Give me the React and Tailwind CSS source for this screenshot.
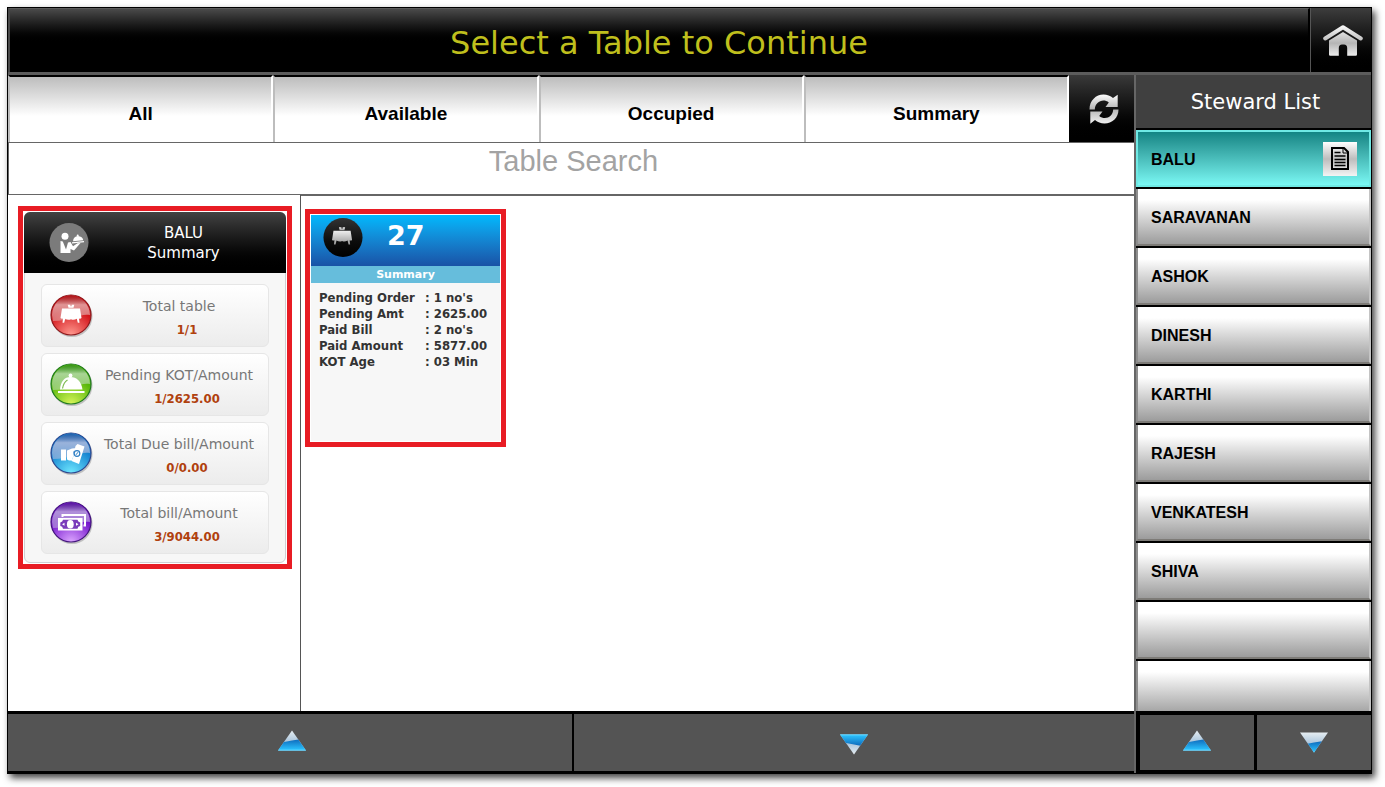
import React, { useState } from 'react';

const TABS = ['All', 'Available', 'Occupied', 'Summary'];

const STEWARDS = ['BALU', 'SARAVANAN', 'ASHOK', 'DINESH', 'KARTHI', 'RAJESH', 'VENKATESH', 'SHIVA'];

const TABLE_ROWS = [
  ['Pending Order', "1 no's"],
  ['Pending Amt', '2625.00'],
  ['Paid Bill', "2 no's"],
  ['Paid Amount', '5877.00'],
  ['KOT Age', '03 Min'],
];

const STATS = [
  { label: 'Total table', value: '1/1', icon: 'table', top: '#8e1a1d', mid: '#e2a3a3', low: '#d3141a', glow: '#ff9a90' },
  { label: 'Pending KOT/Amount', value: '1/2625.00', icon: 'cloche', top: '#1f7a1f', mid: '#b2d8a4', low: '#56b60a', glow: '#d8f55a' },
  { label: 'Total Due bill/Amount', value: '0/0.00', icon: 'hand', top: '#2c468f', mid: '#a9b8dc', low: '#1583d0', glow: '#6fe8ff' },
  { label: 'Total bill/Amount', value: '3/9044.00', icon: 'cash', top: '#43157d', mid: '#b79fdb', low: '#7414cc', glow: '#dca6ff' },
];

function TableGlyph({ fill = '#fff' }) {
  return (
    <g fill={fill}>
      <path d="M12 14.500h18l1.500 9.500q-1.200 1.200-2.500.4l.5 4.300h-1.700l-1-4q-3 1.800-5.800.5-2.800 1.300-5.800-.5l-1 4h-1.700l.5-4.300q-1.300.8-2.500-.4z" />
      <path d="M18.500 13.800l-.8-3h2.600l.2 1.500h1l.2-1.500h2.600l-.8 3z" />
    </g>
  );
}

function StatGlyph({ name }) {
  if (name === 'table') return <TableGlyph />;
  if (name === 'cloche') {
    return (
      <g fill="#fff">
        <circle cx="20.500" cy="12.500" r="1.900" />
        <path d="M10 26.500C10.500 18.500 14.500 14 20.500 14s11 4.500 12 12.500z" />
        <path d="M8 28h26.500v2H8z" />
        <path d="M12.500 25.500c.8-4.500 2.500-7 5-8.500" stroke="#7dbb52" strokeWidth="1.200" fill="none" />
      </g>
    );
  }
  if (name === 'hand') {
    return (
      <g fill="#fff">
        <path d="M11 17.500h5v11h-5z" />
        <path d="M17 18.500l5-2 5-.5v2.500l-4 1 .5 4-1.500 5h-3l-2-1z" />
        <path d="M25.500 14l2-2 7 2.500-5.500 17.500-7.500-3 1.500-3.500z" />
        <circle cx="27" cy="21.500" r="2.800" fill="none" stroke="#2f7fc4" strokeWidth="1.200" />
        <path d="M26 22.800l2-2.600" stroke="#2f7fc4" strokeWidth="1" />
      </g>
    );
  }
  return (
    <g>
      <path d="M12.500 16v-2h22.500v10.500h-1.500" fill="none" stroke="#fff" strokeWidth="2" />
      <path d="M8 17h24.500v12.500H8z" fill="#fff" />
      <path d="M13 18.800h14.500q.3 2.300 2.700 2.600v3.700q-2.400.3-2.700 2.600H13q-.3-2.300-2.700-2.600v-3.700q2.400-.3 2.700-2.600z" fill="#7a3cba" />
      <ellipse cx="20.300" cy="23.200" rx="3.400" ry="4.300" fill="#fff" />
      <path d="M12 23.200l2.500-1.500v3zM28.500 23.200L26 21.700v3z" fill="#fff" />
    </g>
  );
}

function StatIcon({ stat }) {
  const id = `stat-${stat.icon}`;
  return (
    <svg viewBox="0 0 44 44" className="size-11 shrink-0" aria-hidden="true">
      <defs>
        <radialGradient id={`${id}-glow`} cx="0.5" cy="1" r="0.65">
          <stop offset="0" stopColor={stat.glow} />
          <stop offset="1" stopColor={stat.low} />
        </radialGradient>
        <linearGradient id={`${id}-top`} x1="0" y1="0" x2="0" y2="1">
          <stop offset="0" stopColor={stat.top} stopOpacity="0.55" />
          <stop offset="0.35" stopColor={stat.mid} stopOpacity="0.9" />
          <stop offset="1" stopColor={stat.mid} stopOpacity="0.6" />
        </linearGradient>
      </defs>
      <ellipse cx="22" cy="22.500" rx="20.500" ry="20.500" fill="#000" opacity="0.2" />
      <circle cx="21" cy="21" r="20" fill={`url(#${id}-glow)`} stroke={stat.top} strokeWidth="1.200" />
      <path d="M2 21a19 19 0 0 1 38 0C30 19 22 27 3 27z" fill={`url(#${id}-top)`} />
      <StatGlyph name={stat.icon} />
    </svg>
  );
}

function WaiterIcon() {
  return (
    <svg viewBox="0 0 40 40" className="size-10 shrink-0" aria-hidden="true">
      <circle cx="20" cy="19.500" r="19.500" fill="#7b7b7b" />
      <circle cx="16" cy="13.300" r="3.500" fill="#fff" />
      <path d="M11.500 18l2.300.5 3.200 8 2-7 2.500-.5 2.500 4.300 4.500-3 3-.3-6.500 7.500-3.500-1.500v4h-10z" fill="#fff" />
      <path d="M24 18.300q.5-5 5-5.300 4.500.3 5.300 4.300z" fill="#fff" />
      <circle cx="28.700" cy="12.500" r="1" fill="#fff" />
      <path d="M23 19.300l12-1.300v1.200l-12 1.300z" fill="#fff" />
    </svg>
  );
}

function DarkTableIcon() {
  return (
    <svg viewBox="0 0 42 42" className="size-10" aria-hidden="true">
      <defs>
        <linearGradient id="dark-disc" x1="0" y1="0" x2="0" y2="1">
          <stop offset="0" stopColor="#333" />
          <stop offset="0.6" stopColor="#0c0c0c" />
          <stop offset="1" stopColor="#000" />
        </linearGradient>
        <linearGradient id="dark-glyph" x1="0" y1="0" x2="0" y2="1">
          <stop offset="0" stopColor="#eee" />
          <stop offset="1" stopColor="#999" />
        </linearGradient>
      </defs>
      <circle cx="21" cy="20.500" r="20.500" fill="url(#dark-disc)" />
      <g transform="translate(-1 -1)">
        <TableGlyph fill="url(#dark-glyph)" />
      </g>
    </svg>
  );
}

function HomeIcon() {
  return (
    <svg viewBox="0 0 40 32" className="h-8 w-10" aria-hidden="true">
      <defs>
        <linearGradient id="home-fill" x1="0" y1="0" x2="0" y2="32" gradientUnits="userSpaceOnUse">
          <stop offset="0" stopColor="#fff" />
          <stop offset="0.6" stopColor="#b5b5b5" />
          <stop offset="1" stopColor="#eee" />
        </linearGradient>
      </defs>
      <path d="M2.200 14.500L20 3.300l17.800 11.200" fill="none" stroke="url(#home-fill)" strokeWidth="4" strokeLinecap="round" strokeLinejoin="round" />
      <path d="M6 16.500L20 8l14 8.500V30.500q0 1.300-1.300 1.300h-8.500V24q0-3.500-3.200-3.500h-2q-3.200 0-3.200 3.500v7.800H7.300q-1.300 0-1.300-1.300z" fill="url(#home-fill)" />
    </svg>
  );
}

function RefreshIcon() {
  return (
    <svg viewBox="0 0 30 30" className="size-[30px]" aria-hidden="true">
      <defs>
        <linearGradient id="refresh-fill" x1="0" y1="0" x2="0" y2="30" gradientUnits="userSpaceOnUse">
          <stop offset="0" stopColor="#fff" />
          <stop offset="0.5" stopColor="#b5b5b5" />
          <stop offset="1" stopColor="#f2f2f2" />
        </linearGradient>
      </defs>
      <g fill="url(#refresh-fill)">
        <path d="M.5 15.500C.5 6.500 7 .5 14.500.5c3.600 0 7 1.300 9.500 3.500L28.700.8V13H16.500l3.300-4.500C14 4 6 8 5.800 15.500z" />
        <path d="M29.500 15.500c0 8.500-6.500 14-14 14-3.600 0-7-1.300-9.500-3.500L1.300 29.700V17.500h12.200l-3.300 4.500c5.800 4.500 13.800 1 14-6.500z" />
      </g>
    </svg>
  );
}

function NoteIcon() {
  return (
    <svg viewBox="0 0 18 23" className="h-[23px] w-[18px]" fill="none" stroke="#000" aria-hidden="true">
      <path d="M1 1h12l4 4V22H1z" strokeWidth="2" />
      <path d="M12 1v5h5" strokeWidth="1" />
      <path d="M3.500 5.500h6M3.500 9h11M3.500 12.500h11M3.500 15.500h11M3.500 18.500h11" strokeWidth="1.500" />
    </svg>
  );
}

function Arrow({ id, direction = 'up', flipped = false }) {
  const down = direction === 'down';
  return (
    <svg viewBox="0 0 28 21" className="h-[21px] w-7" aria-hidden="true">
      <defs>
        <linearGradient id={id} x1="0" y1="8" x2="0" y2="20" gradientUnits="userSpaceOnUse">
          <stop offset="0" stopColor="#0a5fb4" />
          <stop offset="1" stopColor="#2cc4ff" />
        </linearGradient>
        <linearGradient id={`${id}-tip`} x1="0" y1="0" x2="0" y2="12" gradientUnits="userSpaceOnUse">
          <stop offset="0" stopColor="#e8eef2" />
          <stop offset="1" stopColor="#a9c4dc" />
        </linearGradient>
        <clipPath id={`${id}-clip`}>
          <path d={down && !flipped ? 'M0 .5h28L14 20.500z' : 'M0 20.500h28L14 .5z'} />
        </clipPath>
      </defs>
      <g transform={flipped ? 'matrix(1 0 0 -1 0 21)' : undefined}>
        <g clipPath={`url(#${id}-clip)`}>
          <path d="M0 0h28v21H0z" fill={`url(#${id}-tip)`} />
          <path d="M0 12.500q8-.5 14-2T28 9v12H0z" fill={`url(#${id})`} />
          <path d="M0 19.700h28v1H0z" fill="#7fe0ff" />
        </g>
      </g>
    </svg>
  );
}

function StatCard({ stat }) {
  return (
    <li className="flex h-[63px] items-center rounded-md border border-[#e6e6e6] bg-linear-to-b from-white to-[#ececec] pl-2">
      <StatIcon stat={stat} />
      <div className="flex-1 pt-1 pr-1 text-center">
        <p className="text-sm leading-6 whitespace-nowrap text-[#777]">{stat.label}</p>
        <p className="pl-4 font-['DejaVu_Sans_Condensed','DejaVu_Sans',sans-serif] text-[13px] leading-6 font-bold text-[#b0410e]">
          {stat.value}
        </p>
      </div>
    </li>
  );
}

function SummaryPanel() {
  return (
    <section className="border-[5px] border-[#e81c24] p-px">
      <div className="rounded-md border border-[#cfcfd3] bg-[#f7f7f7]">
        <header className="-mx-px -mt-px flex h-[61px] items-center rounded-t-md bg-linear-to-b from-[#434343] to-black pl-[25px] text-white">
          <WaiterIcon />
          <h2 className="flex-1 pr-8 pl-6 text-center text-[15px] leading-5">
            BALU
            <br />
            Summary
          </h2>
        </header>
        <ul className="flex flex-col gap-1.5 px-4 pt-[11px] pb-2">
          {STATS.map((stat) => (
            <StatCard key={stat.label} stat={stat} />
          ))}
        </ul>
      </div>
    </section>
  );
}

function TableCard() {
  return (
    <article className="h-[238px] w-[201px] border-[5px] border-[#e81c24] p-px">
      <div className="flex h-full flex-col bg-[#f7f7f7]">
        <header className="flex h-[51px] bg-linear-to-b from-[#00b9fd] to-[#1952a6] pt-[3px] pl-3">
          <DarkTableIcon />
          <h2 className="pl-6 text-[27px] leading-9 font-bold text-white">27</h2>
        </header>
        <p className="bg-[#66bddc] text-center text-[11px] leading-[17px] font-bold text-white">Summary</p>
        <table className="mt-[7px] ml-2 text-left font-['DejaVu_Sans_Condensed','DejaVu_Sans',sans-serif] text-[13px] leading-4 text-[#333]">
          <tbody>
            {TABLE_ROWS.map(([label, value]) => (
              <tr key={label}>
                <th scope="row" className="w-[106px] p-0 font-bold whitespace-nowrap">{label}</th>
                <td className="p-0 font-bold whitespace-nowrap">: {value}</td>
              </tr>
            ))}
          </tbody>
        </table>
      </div>
    </article>
  );
}

function StewardRow({ name, active, onSelect }) {
  if (active) {
    return (
      <li className="flex h-[57px] shrink-0 items-center border-2 border-[#6fe9e4] bg-linear-to-b from-[#118584] to-[#7af8f4] pr-3">
        <button type="button" onClick={onSelect} className="h-full flex-1 pt-0.5 pl-[13px] text-left font-bold">
          {name}
        </button>
        <button
          type="button"
          aria-label={`${name} notes`}
          className="flex size-[34px] items-center justify-center bg-linear-to-b from-white via-[#bdbdbd] to-[#f4f4f4]"
        >
          <NoteIcon />
        </button>
      </li>
    );
  }
  return (
    <li className="h-[57px] shrink-0 border-x-2 border-b-2 border-r-[#c4c4c4] border-b-[#7d7b77] border-l-[#8d8d8d] bg-linear-to-b from-white from-20% to-[#9c9c9c]">
      {name && (
        <button type="button" onClick={onSelect} className="h-full w-full pt-0.5 pl-[13px] text-left font-bold">
          {name}
        </button>
      )}
    </li>
  );
}

export default function App() {
  const [steward, setSteward] = useState('BALU');
  const [search, setSearch] = useState('');

  return (
    <div className="h-screen min-h-[640px] bg-white pt-[7px] pr-[13px] pb-[13px] pl-[7px] font-['DejaVu_Sans',Verdana,sans-serif]">
      <div className="flex h-full flex-col border border-black bg-white shadow-[3px_4px_7px_rgba(0,0,0,0.75)]">
        {/* title bar */}
        <header className="flex h-[67px] shrink-0 border-b-[3px] border-[#5c5c5c]">
          <h1 className="flex flex-1 items-center justify-center border-t border-r-2 border-l-2 border-t-[#5a5a5a] border-r-black border-l-[#484848] bg-linear-to-b from-[#4a4a4a] to-black to-55% pt-1 text-[32px] leading-10 text-[#bfbf1d]">
            Select a Table to Continue
          </h1>
          <button
            type="button"
            aria-label="Home"
            className="flex w-[61px] items-center justify-center border-l border-[#555] bg-linear-to-b from-[#3d3d3d] to-black pl-1"
          >
            <HomeIcon />
          </button>
        </header>

        <div className="flex min-h-0 flex-1">
          <main className="flex min-w-0 flex-1 flex-col">
            <nav className="flex h-[67px] shrink-0 font-['Liberation_Sans',Arial,sans-serif]">
              {TABS.map((tab) => (
                <button
                  key={tab}
                  type="button"
                  className="flex-1 border-t-2 border-r-2 border-l-2 border-t-black border-r-white border-l-[#bdbdbd] bg-linear-to-b from-[#bdbdbd] to-white to-60% pt-2 text-[19px] leading-6 font-bold text-black"
                >
                  {tab}
                </button>
              ))}
              <button
                type="button"
                aria-label="Refresh"
                className="flex w-[65px] items-center justify-center bg-linear-to-b from-[#3a3a3a] to-black pl-1"
              >
                <RefreshIcon />
              </button>
            </nav>
            <input
              type="text"
              aria-label="Table Search"
              placeholder="Table Search"
              value={search}
              onChange={(e) => setSearch(e.target.value)}
              className="h-[53px] w-full shrink-0 border border-r-0 border-[#666] pb-[14px] pl-1 text-center font-['Liberation_Sans',Arial,sans-serif] text-[29px] text-black outline-none placeholder:text-[#a3a3a3]"
            />
            <div className="flex min-h-0 flex-1">
              <div className="w-[293px] shrink-0 overflow-hidden border-r border-[#555] pt-[11px] pr-2 pl-2.5">
                <SummaryPanel />
              </div>
              <div className="flex-1 overflow-hidden border-t border-[#666] pt-[13px] pl-1">
                <TableCard />
              </div>
            </div>
            <footer className="flex h-[62px] shrink-0 border-t-[3px] border-b-2 border-black bg-[#545454] pl-1">
              <button type="button" aria-label="Scroll tables up" className="flex flex-1 items-center justify-center border-r-2 border-black pb-1">
                <Arrow id="main-up" />
              </button>
              <button type="button" aria-label="Scroll tables down" className="flex flex-1 items-center justify-center pt-1">
                <Arrow id="main-down" direction="down" flipped />
              </button>
            </footer>
          </main>

          <aside className="flex w-[237px] shrink-0 flex-col border-l-2 border-[#666] bg-black">
            <h2 className="h-[53px] shrink-0 bg-[#404040] pl-1 text-center text-[21px] leading-[54px] text-white">Steward List</h2>
            <ul className="mt-0.5 flex min-h-0 flex-1 flex-col gap-0.5 overflow-hidden font-['Liberation_Sans',Arial,sans-serif] text-base text-black">
              {STEWARDS.map((name) => (
                <StewardRow key={name} name={name} active={name === steward} onSelect={() => setSteward(name)} />
              ))}
              <StewardRow />
              <StewardRow />
            </ul>
            <footer className="flex h-[62px] shrink-0 gap-[3px] border-t-4 border-b-[3px] border-l-4 border-black">
              <button type="button" aria-label="Scroll stewards up" className="flex flex-1 items-center justify-center bg-[#545454] pb-1">
                <Arrow id="side-up" />
              </button>
              <button type="button" aria-label="Scroll stewards down" className="flex flex-1 items-center justify-center bg-[#545454]">
                <Arrow id="side-down" direction="down" />
              </button>
            </footer>
          </aside>
        </div>
      </div>
    </div>
  );
}
